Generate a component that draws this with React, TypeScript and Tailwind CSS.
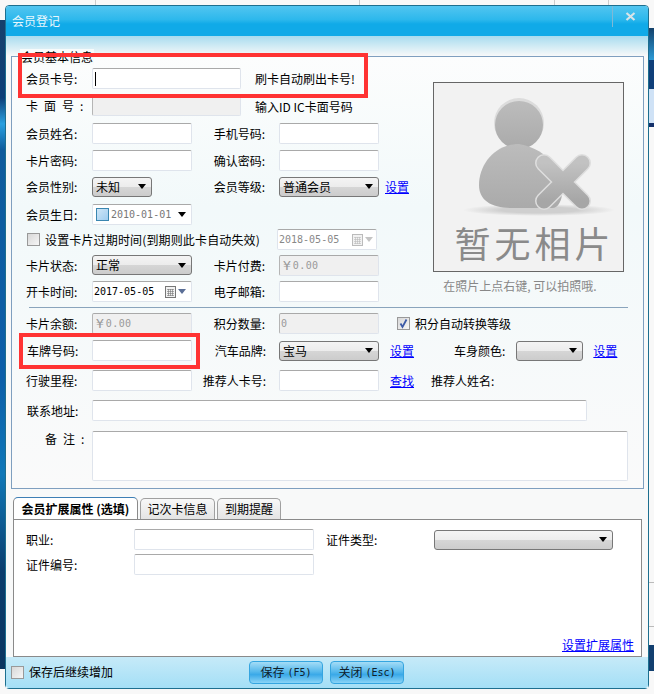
import type { ReactNode } from "react";

const mono = "font-['DejaVu_Sans_Mono',monospace] text-[10px]";

function Label({ children, className = "-ml-px w-[66px]" }: { children: ReactNode; className?: string }) {
  return <div className={`shrink-0 leading-[21px] ${className}`}>{children}</div>;
}

function Field({ className = "w-[100px]", disabled, children }: { className?: string; disabled?: boolean; children?: ReactNode }) {
  return (
    <div
      className={`flex h-[21px] shrink-0 items-center rounded-[2px] border border-[#dfe4ec] border-t-[#a9a9a9] ${disabled ? "border-l-[#b5b5b5] bg-[#f0f0f0]" : "bg-white"} ${className}`}
    >
      {children}
    </div>
  );
}

function Money({ children }: { children: ReactNode }) {
  return (
    <div className={`flex items-center pl-[3px] text-[#999] ${mono}`}>
      <span className="text-[13px] leading-none">¥</span>
      <span className="ml-[2px] tracking-[0.4px]">{children}</span>
    </div>
  );
}

function Arrow({ className = "" }: { className?: string }) {
  return <span className={`h-0 w-0 border-x-[4px] border-t-[5px] border-x-transparent border-t-black ${className}`} />;
}

function Select({ className = "w-[100px]", children }: { className?: string; children?: ReactNode }) {
  return (
    <div className={`flex h-[20px] shrink-0 items-center justify-between rounded-[3px] border border-[#777] bg-[linear-gradient(#f4f4f4_0,#ececec_50%,#d6d6d6_50%,#cccccc_100%)] pl-[3px] pr-[5px] ${className}`}>
      <span>{children}</span>
      <Arrow />
    </div>
  );
}

function Check({ checked }: { checked?: boolean }) {
  return (
    <div className="flex h-[13px] w-[13px] shrink-0 items-center justify-center border border-[#999] bg-[linear-gradient(135deg,#d8d8d8,#f6f6f6)]">
      {checked && (
        <svg width="11" height="11" viewBox="0 0 11 11">
          <path d="M2.5 5.5 L4.5 9 L8.5 1.5" fill="none" stroke="#3c5aa6" strokeWidth="1.8" />
        </svg>
      )}
    </div>
  );
}

function Calendar({ muted }: { muted?: boolean }) {
  const c = muted ? "#bbb" : "#777";
  return (
    <svg width="11" height="12" viewBox="0 0 11 12" className="shrink-0">
      <rect x="0.5" y="0.5" width="10" height="11" fill="#f2f2f2" stroke={c} />
      <path d="M2 3.5H9M2 5.5H9M2 7.5H9M2 9.5H9M3.5 3V10M5.5 3V10M7.5 3V10" stroke={c} strokeWidth="0.6" />
    </svg>
  );
}

function A({ children, className = "" }: { children: ReactNode; className?: string }) {
  return <a className={`shrink-0 text-[#0000ff] underline ${className}`}>{children}</a>;
}

function Photo() {
  return (
    <div className="flex h-[190px] w-[191px] flex-col items-center border border-[#666] bg-[#f2f2f2]">
      <svg width="189" height="140" viewBox="0 0 189 140" className="shrink-0">
        <defs>
          <linearGradient id="p" x1="0" y1="0" x2="0" y2="1">
            <stop offset="0" stopColor="#bcbcbc" />
            <stop offset="1" stopColor="#aaaaaa" />
          </linearGradient>
          <linearGradient id="x" x1="0" y1="0" x2="0" y2="1">
            <stop offset="0" stopColor="#c2c2c2" />
            <stop offset="1" stopColor="#a6a6a6" />
          </linearGradient>
          <radialGradient id="s">
            <stop offset="0.5" stopColor="#cfcfcf" />
            <stop offset="1" stopColor="#f2f2f2" />
          </radialGradient>
        </defs>
        <ellipse cx="105" cy="127" rx="76" ry="6" fill="url(#s)" />
        <circle cx="85" cy="40" r="25" fill="#dcdcdc" />
        <circle cx="85" cy="42" r="24" fill="url(#p)" />
        <path d="M85 61C60 61 45 82 45 102C45 118 58 125 78 125H118C135 125 135 70 85 61Z" fill="url(#p)" />
        <path d="M110 80L148 118M148 80L110 118" stroke="#dedede" strokeWidth="18" strokeLinecap="round" />
        <path d="M110 80L148 118M148 80L110 118" stroke="url(#x)" strokeWidth="15" strokeLinecap="round" />
      </svg>
      <div className="ml-[12px] mt-[-3px] whitespace-nowrap text-[36px] leading-[44px] tracking-[4px] text-[#8a8a8a]">暂无相片</div>
    </div>
  );
}

function Btn({ children }: { children: ReactNode }) {
  return (
    <div className="flex h-[23px] w-[74px] items-center justify-center rounded-[4px] border border-[#35a5e0] bg-[linear-gradient(#a4dcf6_0,#57b9ec_45%,#3aa9e8_60%,#8ad4f6_100%)] text-[#10202a]">
      {children}
    </div>
  );
}

function Tab({ children, active, className }: { children: ReactNode; active?: boolean; className: string }) {
  return (
    <div
      className={`flex items-center justify-center whitespace-nowrap rounded-t-[5px] border border-b-0 ${active ? "h-[22px] border-[#8a8a8a] border-t-[#3e7fb5] bg-white font-bold" : "h-[21px] border-[#a0a0a0] bg-[linear-gradient(#f8f8f8,#e4e4e4)]"} ${className}`}
    >
      {children}
    </div>
  );
}

export default function App() {
  return (
    <div className="flex h-[694px] w-[654px] flex-col overflow-hidden bg-[#f8f8f8] font-['Noto_Sans_CJK_SC','Liberation_Sans',sans-serif] text-[12px] text-black">
      <div className="flex h-[5px] shrink-0">
        <div className="w-[96px] border-r border-[#ccc]" />
        <div className="w-[264px] border-r border-[#ccc]" />
        <div className="w-[195px] border-r border-[#ccc]" />
        <div className="w-[54px] border-r border-[#ccc]" />
      </div>

      <div className="flex h-[684px] shrink-0">
        <div className="mb-[20px] mt-[15px] w-[5px] bg-[linear-gradient(#16406c_0,#0d3f78_12%,#2aa0e0_16%,#0f5b9c_20%,#0c5ea8_55%,#0f78b8_70%,#0a3c6c_85%,#0a3560_100%)]" />

        <div className="flex h-[684px] w-[644px] shrink-0 flex-col rounded-[4px] border border-[#1d6f8f] bg-[#f8f9f9]">
          <div className="flex h-[30px] shrink-0 items-center justify-between rounded-t-[3px] bg-[linear-gradient(#52c5f0_0,#2db8ec_45%,#10aae8_60%,#10aae8_100%)]">
            <span className="pl-[6px] text-[#e8f7fd]">会员登记</span>
            <div className="flex h-[21px] w-[36px] items-center justify-center self-start border-l border-[#7fb9d6]">
              <svg width="11" height="9" viewBox="0 0 11 9">
                <path d="M1.5 1L9.5 8M9.5 1L1.5 8" stroke="#d8e4e8" strokeWidth="2.2" />
              </svg>
            </div>
          </div>

          <div className="flex min-h-0 flex-1 flex-col bg-[linear-gradient(#a8dcef_0,#f8f9f9_20px)] pt-[20px]">
            <div className="relative ml-[5px] w-[633px] border border-[#7f9fbf] bg-[linear-gradient(#fcfdfd_0,#f2f9fa_35%,#fafafa_100%)] pb-[7px] pl-[15px] pt-[11px]">
              <div className="absolute left-[8px] top-[-8px] bg-[#f8fbfb] px-[1px] leading-[16px]">会员基本信息</div>

              <div className="flex">
                <div className="w-[406px] shrink-0">
                  <div className="flex">
                    <Label>会员卡号:</Label>
                    <Field className="w-[149px] border-[#a8c8e0]">
                      <span className="ml-[2px] h-[14px] w-px bg-black" />
                    </Field>
                    <div className="ml-[14px] leading-[21px]">刷卡自动刷出卡号!</div>
                  </div>
                  <div className="mt-[6px] flex">
                    <Label><span className="tracking-[6px]">卡面号</span>:</Label>
                    <Field className="w-[149px]" disabled />
                    <div className="ml-[14px] pt-[2px] leading-[19px]">输入ID IC卡面号码</div>
                  </div>
                  <div className="mt-[7px] flex">
                    <Label>会员姓名:</Label>
                    <Field />
                    <Label className="w-[75px] pr-[2px] text-right">手机号码:</Label>
                    <Field className="ml-[12px] w-[100px]" />
                  </div>
                  <div className="mt-[6px] flex">
                    <Label>卡片密码:</Label>
                    <Field />
                    <Label className="w-[75px] pr-[2px] text-right">确认密码:</Label>
                    <Field className="ml-[12px] w-[100px]" />
                  </div>
                  <div className="mt-[5px] flex items-center">
                    <Label>会员性别:</Label>
                    <Select className="w-[60px]">未知</Select>
                    <Label className="w-[115px] pr-[2px] text-right">会员等级:</Label>
                    <Select className="ml-[12px] w-[100px]">普通会员</Select>
                    <A className="ml-[6px]">设置</A>
                  </div>
                  <div className="mt-[7px] flex">
                    <Label>会员生日:</Label>
                    <Field className="w-[100px] pl-[3px] pr-[5px]">
                      <span className="h-[13px] w-[13px] shrink-0 border border-[#3a86b0] bg-[linear-gradient(135deg,#cfe6f7,#9fcdf0)]" />
                      <span className={`ml-[2px] text-[#777] ${mono}`}>2010-01-01</span>
                      <Arrow className="ml-auto" />
                    </Field>
                  </div>
                  <div className="mt-[4px] flex items-center">
                    <Check />
                    <span className="ml-[5px] w-[232px] shrink-0 whitespace-nowrap tracking-[0.15px]">设置卡片过期时间(到期则此卡自动失效)</span>
                    <Field className="w-[100px] pl-[1px] pr-[3px]">
                      <span className={`text-[#888] ${mono}`}>2018-05-05</span>
                      <span className="ml-auto"><Calendar muted /></span>
                      <span className="ml-[2px] h-0 w-0 border-x-[4px] border-t-[5px] border-x-transparent border-t-[#c4c4c4]" />
                    </Field>
                  </div>
                  <div className="mt-[5px] flex">
                    <Label>卡片状态:</Label>
                    <Select>正常</Select>
                    <Label className="w-[75px] pr-[2px] text-right">卡片付费:</Label>
                    <Field className="ml-[12px] w-[100px] border-[#aaa]" disabled><Money>0.00</Money></Field>
                  </div>
                  <div className="mt-[5px] flex">
                    <Label>开卡时间:</Label>
                    <Field className="w-[100px] pl-[1px] pr-[5px]">
                      <span className={mono}>2017-05-05</span>
                      <span className="ml-auto"><Calendar /></span>
                      <span className="ml-[2px] h-0 w-0 border-x-[4px] border-t-[5px] border-x-transparent border-t-[#5a6e96]" />
                    </Field>
                    <Label className="w-[75px] pr-[2px] text-right">电子邮箱:</Label>
                    <Field className="ml-[12px] w-[100px]" />
                  </div>
                </div>
                <div className="mt-[14px] flex w-[191px] shrink-0 flex-col items-center">
                  <Photo />
                  <div className="mr-[17px] mt-[5px] whitespace-nowrap leading-[18px] text-[#888]">在照片上点右键, 可以拍照哦.</div>
                </div>
              </div>

              <div className="ml-[2px] mt-[5px] h-px w-[599px] bg-[#8aa4bc]" />

              <div className="mt-[5px] flex items-center">
                <Label>卡片余额:</Label>
                <Field className="w-[100px] border-[#aaa]" disabled><Money>0.00</Money></Field>
                <Label className="w-[75px] pr-[2px] text-right">积分数量:</Label>
                <Field className="ml-[12px] w-[100px] border-[#aaa]" disabled>
                  <span className={`pl-[1px] text-[#999] ${mono}`}>0</span>
                </Field>
                <div className="ml-[18px]"><Check checked /></div>
                <span className="ml-[5px]">积分自动转换等级</span>
              </div>
              <div className="mt-[6px] flex items-center">
                <Label className="w-[65px]">车牌号码:</Label>
                <Field />
                <Label className="w-[75px] pr-[1px] text-right">汽车品牌:</Label>
                <Select className="ml-[12px] w-[100px]">宝马</Select>
                <A className="ml-[11px]">设置</A>
                <span className="ml-[40px]">车身颜色:</span>
                <Select className="ml-[11px] w-[67px]" />
                <A className="ml-[10px]">设置</A>
              </div>
              <div className="mt-[9px] flex items-center">
                <Label>行驶里程:</Label>
                <Field />
                <Label className="w-[75px] pr-[1px] text-right">推荐人卡号:</Label>
                <Field className="ml-[12px] w-[100px]" />
                <A className="ml-[11px]">查找</A>
                <span className="ml-[17px]">推荐人姓名:</span>
              </div>
              <div className="mt-[9px] flex">
                <Label className="w-[65px]">联系地址:</Label>
                <Field className="w-[495px]" />
              </div>
              <div className="mt-[10px] flex">
                <Label className="mt-[-3px] w-[65px] pl-[18px]"><span className="tracking-[6px]">备注</span>:</Label>
                <Field className="h-[50px] w-[536px]" />
              </div>
            </div>

            <div className="ml-[7px] mr-[6px] mt-[8px] flex flex-1 flex-col">
              <div className="flex h-[22px] items-end">
                <Tab active className="w-[125px]">会员扩展属性 (选填)</Tab>
                <Tab className="ml-[2px] w-[75px]">记次卡信息</Tab>
                <Tab className="ml-[2px] w-[64px]">到期提醒</Tab>
              </div>
              <div className="flex h-[138px] flex-col border border-[#8a8a8a] bg-white pl-[12px] pt-[9px]">
                <div className="flex items-center">
                  <Label className="w-[108px]">职业:</Label>
                  <Field className="w-[180px]" />
                  <Label className="ml-[12px] w-[108px]">证件类型:</Label>
                  <Select className="w-[179px]" />
                </div>
                <div className="mt-[4px] flex items-center">
                  <Label className="w-[108px]">证件编号:</Label>
                  <Field className="w-[180px]" />
                </div>
                <div className="mt-auto flex justify-end pb-[2px] pr-[7px]">
                  <A>设置扩展属性</A>
                </div>
              </div>
              <div className="ml-[-7px] mr-[-6px] flex flex-1 items-center rounded-b-[3px] bg-[linear-gradient(#c6eaf8,#a4dff6)] pb-[1px]">
                <div className="ml-[5px]"><Check /></div>
                <span className="ml-[5px]">保存后继续增加</span>
                <div className="ml-[136px]"><Btn>保存<span className={`ml-[3px] ${mono}`}>(F5)</span></Btn></div>
                <div className="ml-[7px]"><Btn>关闭<span className={`ml-[3px] ${mono}`}>(Esc)</span></Btn></div>
              </div>
            </div>
          </div>
        </div>

        <div className="flex w-[5px] flex-col">
          <div className="mt-[23px] h-[32px] bg-[linear-gradient(#13406a,#2b9ad6)]" />
          <div className="h-[29px] bg-[#0f3f7a]" />
          <div className="h-[34px] bg-[#cfe2f6]" />
          <div className="h-[4px] bg-[#13306a]" />
          <div className="h-[456px] border-b border-[#bbb]" />
          <div className="h-[44px] border-b border-[#bbb]" />
          <div className="mt-[18px] h-[26px] bg-[#123f6f]" />
        </div>
      </div>

      <div className="pointer-events-none absolute left-[18px] top-[53px] h-[45px] w-[350px] border-[4px] border-[#f33]" />
      <div className="pointer-events-none absolute left-[19px] top-[333px] h-[36px] w-[181px] border-[4px] border-[#f33]" />
    </div>
  );
}
